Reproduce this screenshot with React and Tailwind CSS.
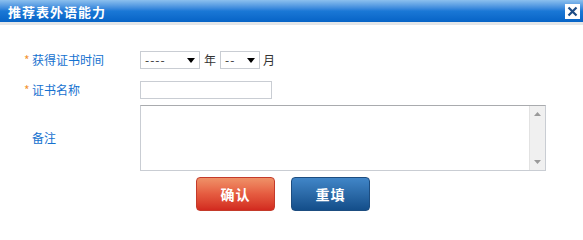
import { ChevronDown } from 'lucide-react';

const font = { fontFamily: '"Noto Sans CJK SC", "Liberation Sans", sans-serif' };

function Caret() {
  return (
    <svg width="8" height="5" viewBox="0 0 8 5" className="shrink-0">
      <path d="M0 0h8L4 5z" fill="#000" />
    </svg>
  );
}

function FakeSelect({ value, width }) {
  return (
    <div
      className={`flex items-center justify-between h-[18px] border border-[#c9cdd3] bg-white pl-[4px] pr-[4px] ${width}`}
    >
      <span className="text-[12px] leading-none text-[#333] tracking-[1px]">{value}</span>
      <Caret />
    </div>
  );
}

function Label({ required, children }) {
  return (
    <div className="w-[140px] shrink-0 flex items-center pl-[24px] text-[12px] text-[#1571cf]">
      <span className="w-[8px] text-[#f39332] text-[12px] leading-none">{required ? '*' : ''}</span>
      <span>{children}</span>
    </div>
  );
}

export default function App() {
  return (
    <div className="w-[583px] h-[236px] bg-white overflow-hidden" style={font}>
      {/* title bar */}
      <div className="h-[22px] flex items-center justify-between bg-gradient-to-b from-[#8cc0ee] via-[#1a78d6] to-[#0663c6] pl-[8px] pr-[3px]">
        <span className="text-white font-bold text-[13px] leading-none tracking-[1px]">推荐表外语能力</span>
        <div className="w-[15px] h-[15px] bg-white grid place-items-center">
          <svg width="11" height="11" viewBox="0 0 11 11">
            <path d="M1.5 1.5l8 8M9.5 1.5l-8 8" stroke="#1d4c86" strokeWidth="2.2" />
          </svg>
        </div>
      </div>
      <div className="h-[3px] bg-[#e4e6e8]" />

      {/* form */}
      <div className="pt-[25px] flex flex-col">
        <div className="flex items-center h-[20px]">
          <Label required>获得证书时间</Label>
          <FakeSelect value="----" width="w-[60px]" />
          <span className="text-[12px] text-[#333] mx-[4px]">年</span>
          <FakeSelect value="--" width="w-[40px]" />
          <span className="text-[12px] text-[#333] ml-[3px]">月</span>
        </div>

        <div className="flex items-center h-[20px] mt-[10px]">
          <Label required>证书名称</Label>
          <div className="w-[132px] h-[18px] border border-[#c9cdd3] bg-white" />
        </div>

        <div className="flex items-center mt-[5px]">
          <Label>备注</Label>
          <div className="w-[406px] h-[66px] flex border border-[#c9cdd3] border-t-[#a9abae] bg-white">
            <div className="flex-1" />
            <div className="w-[16px] bg-[#f0f0f0] border-l border-[#e2e2e2] flex flex-col justify-between items-center py-[6px]">
              <svg width="7" height="4" viewBox="0 0 7 4">
                <path d="M0 4h7L3.5 0z" fill="#9a9a9a" />
              </svg>
              <svg width="7" height="4" viewBox="0 0 7 4">
                <path d="M0 0h7L3.5 4z" fill="#9a9a9a" />
              </svg>
            </div>
          </div>
        </div>

        <div className="flex mt-[6px] pl-[196px] gap-[16px]">
          <button className="w-[79px] h-[34px] rounded-[4px] border border-[#c43a2a] bg-gradient-to-b from-[#ef9168] via-[#e55b40] to-[#d2291f] text-white font-bold text-[14px] tracking-[1px]">
            确认
          </button>
          <button className="w-[79px] h-[34px] rounded-[4px] border border-[#1d4d80] bg-gradient-to-b from-[#4186c8] via-[#2b6aa8] to-[#134e8a] text-white font-bold text-[14px] tracking-[1px]">
            重填
          </button>
        </div>
      </div>
    </div>
  );
}
